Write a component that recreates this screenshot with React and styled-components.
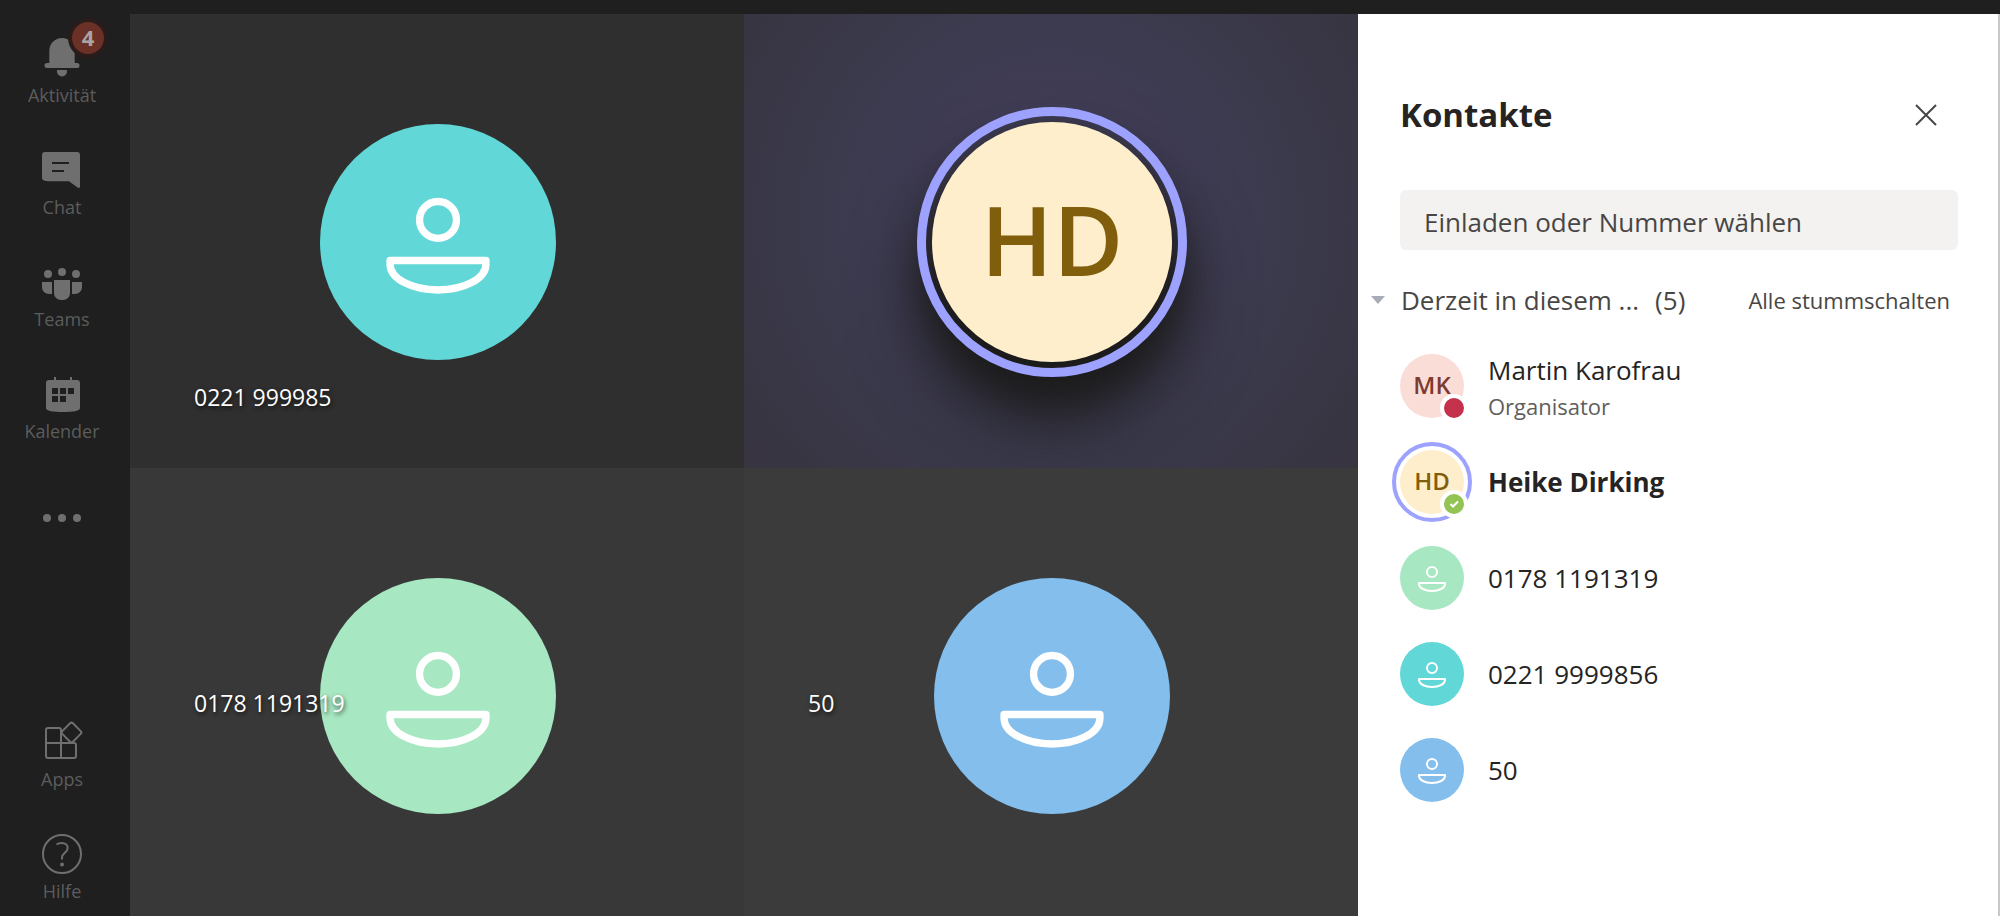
import React from 'react'
import { useState } from 'react'
import styled, { createGlobalStyle } from 'styled-components'

const GlobalStyle = createGlobalStyle`
  * {
    box-sizing: border-box;
  }
  body {
    margin: 0;
    background-color: #1f1f1f;
    font-family: 'Open Sans', 'Noto Sans', sans-serif;
  }
  button, input {
    font-family: inherit;
  }
  button {
    padding: 0;
    border: none;
    background: none;
    cursor: pointer;
  }
`;

const Container = styled.div`
  height: 100vh;
  padding-top: 14px;
  overflow: hidden;
  background-color: #1f1f1f;
`;

const Body = styled.div`
  height: calc(100vh - 8px);
  display: flex;
`;

const Sidebar = styled.nav`
  width: 130px;
  padding-right: 6px;
  flex-shrink: 0;
  display: flex;
  flex-direction: column;
`;

const Spacer = styled.div`
  flex: 1;
`;

const NavButton = styled.button`
  position: relative;
  height: 112px;
  padding-top: 20px;
  display: flex;
  flex-direction: column;
  align-items: center;
  color: #6f6f6f;
`;

const NavIcon = styled.svg`
  width: 48px;
  height: 48px;
  overflow: visible;
  fill: currentColor;
`;

const NavLabel = styled.span`
  font-size: 18px;
  line-height: 26px;
  color: #5c5c5c;
`;

const Badge = styled.span`
  position: absolute;
  top: 8px;
  left: 72px;
  width: 32px;
  height: 32px;
  border-radius: 50%;
  background-color: #6b3026;
  box-shadow: 0 0 0 4px #291c1a;
  color: #a9a5a4;
  font-size: 22px;
  font-weight: 700;
  line-height: 30px;
  text-align: center;
`;

const Stage = styled.main`
  flex: 1;
  min-width: 0;
  display: grid;
  grid-template-columns: 1fr 1fr;
  grid-template-rows: 1fr 1fr;
`;

const Tile = styled.section`
  position: relative;
  padding: 2px 0 0 2px;
  display: flex;
  align-items: center;
  justify-content: center;
  overflow: hidden;
  background: ${props => props.$background};
`;

const TileLabel = styled.span`
  position: absolute;
  left: 64px;
  top: ${props => props.$top};
  font-size: 23px;
  line-height: 30px;
  color: white;
  text-shadow: 1px 2px 4px rgba(0, 0, 0, 0.7);
`;

const Avatar = styled.div`
  position: relative;
  width: ${props => props.$size};
  height: ${props => props.$size};
  flex-shrink: 0;
  display: flex;
  align-items: center;
  justify-content: center;
  border-radius: 50%;
  background-color: ${props => props.$background};
  color: ${props => props.$color || 'white'};
  font-size: ${props => props.$fontSize};
  font-weight: 600;
  line-height: 1;
`;

const SpeakingAvatar = styled(Avatar)`
  padding-bottom: 6px;
  box-shadow: 0 48px 72px 8px #1c1c1c, 0 28px 40px 4px #1c1c1c;

  &::after {
    content: '';
    position: absolute;
    inset: -15px;
    border: 9px solid #9ea2ff;
    border-radius: 50%;
  }
`;

const RingAvatar = styled(Avatar)`
  &::before {
    content: '';
    position: absolute;
    inset: -8px;
    border: 4px solid #9ea2ff;
    border-radius: 50%;
  }
`;

const Initials = styled.span`
  padding-bottom: 2px;
`;

const PersonSvg = styled.svg`
  width: 50%;
  height: 50%;
  fill: none;
  stroke: currentColor;
  stroke-width: 2;
  stroke-linejoin: round;
`;

const Status = styled.span`
  position: absolute;
  right: -4px;
  bottom: -4px;
  width: 28px;
  height: 28px;
  display: flex;
  align-items: center;
  justify-content: center;
  border: 4px solid white;
  border-radius: 50%;
  background-color: ${props => props.$color};
`;

const Panel = styled.aside`
  width: 642px;
  padding: 76px 40px 0 42px;
  flex-shrink: 0;
  background-color: white;
  border-right: 2px solid #c8c8c8;
`;

const PanelHeader = styled.header`
  height: 50px;
  padding-right: 16px;
  display: flex;
  align-items: center;
  justify-content: space-between;
`;

const Title = styled.h1`
  margin: 0;
  font-size: 33px;
  line-height: 50px;
  font-weight: 700;
  color: #252423;
`;

const CloseButton = styled.button`
  width: 32px;
  height: 32px;
  display: flex;
  align-items: center;
  justify-content: center;
  color: #484644;
`;

const Search = styled.input`
  width: 100%;
  height: 60px;
  margin-top: 50px;
  padding: 4px 24px 0;
  border: none;
  border-radius: 6px;
  background-color: #f3f2f1;
  font-size: 26px;
  color: #484644;

  &::placeholder {
    color: #484644;
    opacity: 1;
  }
`;

const SectionHeader = styled.div`
  height: 40px;
  margin: 30px 8px 0 -29px;
  display: flex;
  align-items: center;
  color: #484644;
`;

const Toggle = styled.button`
  display: flex;
  align-items: center;
  gap: 16px;
  font-size: 26px;
  line-height: 40px;
  color: #484644;
`;

const MuteAll = styled.button`
  margin-left: auto;
  font-size: 22px;
  line-height: 40px;
  color: #484644;
`;

const List = styled.ul`
  margin: 18px 0 0;
  padding: 0;
  list-style: none;
`;

const Contact = styled.li`
  height: 96px;
  display: flex;
  align-items: center;
  gap: 24px;
`;

const ContactText = styled.div`
  padding-top: ${props => (props.$twoLines ? '4px' : '0')};
`;

const Name = styled.div`
  font-size: 26px;
  line-height: 36px;
  font-weight: ${props => (props.$bold ? 700 : 400)};
  color: #252423;
`;

const Role = styled.div`
  font-size: 22px;
  line-height: 36px;
  color: #605e5c;
`;

const PersonIcon = () => (
  <PersonSvg viewBox="0 0 32 32" aria-hidden="true">
    <circle cx="16" cy="10" r="5" />
    <path d="M3 21h26v1c0 4-6 7-13 7s-13-3-13-7z" />
  </PersonSvg>
)

const icons = {
  activity: (
    <>
      <path d="M24 4c-7 0-12.7 5.7-12.7 12.7V29H9a2.5 2.5 0 0 0 0 5h30a2.5 2.5 0 0 0 0-5h-2.3V16.7C36.7 9.7 31 4 24 4z" />
      <path d="M19 36h10v1.5a5 5 0 0 1-10 0z" />
    </>
  ),
  chat: (
    <>
      <path d="M7 6h32a3 3 0 0 1 3 3v31.5c0 1.5-1.3 1.9-2.4 1.1L31 35.3H15C8 35.3 4 34.7 4 32V9a3 3 0 0 1 3-3z" />
      <path d="M14 17h17M14 25h12" stroke="#1f1f1f" strokeWidth="2" />
    </>
  ),
  teams: (
    <>
      <circle cx="10" cy="16" r="4" />
      <circle cx="24" cy="14" r="4" />
      <circle cx="38" cy="16" r="4" />
      <path d="M4 24h10v12h-3a7 7 0 0 1-7-7zM16 22h16v13a7 7 0 0 1-7 7h-2a7 7 0 0 1-7-7zM34 24h10v5a7 7 0 0 1-7 7h-3z" />
    </>
  ),
  calendar: (
    <>
      <path d="M16 7h2v3h14V7h2v3h5a3 3 0 0 1 3 3v25c0 3-7 4-17 4S8 41 8 38V13a3 3 0 0 1 3-3h5z" />
      <path d="M14 18h6v6h-6zM22 18h6v6h-6zM30 18h6v6h-6zM14 26h6v6h-6zM22 26h6v6h-6z" fill="#1f1f1f" />
    </>
  ),
  more: (
    <>
      <circle cx="9" cy="36" r="4" />
      <circle cx="24" cy="36" r="4" />
      <circle cx="39" cy="36" r="4" />
    </>
  ),
  apps: (
    <g fill="none" stroke="currentColor" strokeWidth="2" strokeLinejoin="round">
      <path d="M23 25V12a2 2 0 0 0-2-2H10a2 2 0 0 0-2 2v26a2 2 0 0 0 2 2h26a2 2 0 0 0 2-2V27a2 2 0 0 0-2-2H8M23 25v15" />
      <rect x="26" y="7" width="15" height="15" rx="2" transform="rotate(45 33.5 14.5)" />
    </g>
  ),
  help: (
    <>
      <circle cx="24" cy="24" r="19" fill="none" stroke="currentColor" strokeWidth="2" />
      <path d="M18.5 14.5c1.5-1 3.3-1.5 5.2-1.5 3.6 0 6 2 6 5 0 4.500-5.700 5-5.700 9.500v2" fill="none" stroke="currentColor" strokeWidth="2" />
      <circle cx="24" cy="34.5" r="1.9" />
    </>
  ),
}

const topItems = [
  { icon: 'activity', label: 'Aktivität', badge: 4 },
  { icon: 'chat', label: 'Chat' },
  { icon: 'teams', label: 'Teams' },
  { icon: 'calendar', label: 'Kalender' },
  { icon: 'more' },
]

const bottomItems = [
  { icon: 'apps', label: 'Apps' },
  { icon: 'help', label: 'Hilfe' },
]

const contacts = [
  { name: 'Martin Karofrau', role: 'Organisator', initials: 'MK', background: '#fbddd8', color: '#7d3a2e', status: 'busy' },
  { name: 'Heike Dirking', initials: 'HD', background: '#feeecb', color: '#815e0c', status: 'available', speaking: true },
  { name: '0178 1191319', background: '#a7e7c2' },
  { name: '0221 9999856', background: '#61d7d7' },
  { name: '50', background: '#83beec' },
]

const NavItem = ({ item }) => (
  <NavButton aria-label={item.label || 'Mehr'}>
    <NavIcon viewBox="0 0 48 48" aria-hidden="true">{icons[item.icon]}</NavIcon>
    {item.label && <NavLabel>{item.label}</NavLabel>}
    {item.badge && <Badge>{item.badge}</Badge>}
  </NavButton>
)

const ContactRow = ({ contact }) => {
  const Picture = contact.speaking ? RingAvatar : Avatar
  return (
    <Contact>
      <Picture $size="64px" $fontSize="24px" $background={contact.background} $color={contact.color}>
        {contact.initials ? <Initials>{contact.initials}</Initials> : <PersonIcon />}
        {contact.status === 'busy' && <Status $color="#c4314b" />}
        {contact.status === 'available' && (
          <Status $color="#92c353">
            <svg width="20" height="20" viewBox="0 0 20 20" fill="none" stroke="white" strokeWidth="2">
              <path d="M6.5 10l2.5 2.5 5-5" />
            </svg>
          </Status>
        )}
      </Picture>
      <ContactText $twoLines={Boolean(contact.role)}>
        <Name $bold={contact.speaking}>{contact.name}</Name>
        {contact.role && <Role>{contact.role}</Role>}
      </ContactText>
    </Contact>
  )
}

function App() {

  const [query, setQuery] = useState('')
  const [open, setOpen] = useState(true)

  return (
    <>
      <GlobalStyle />
      <Container>
        <Body>
          <Sidebar>
            {topItems.map(item => <NavItem key={item.icon} item={item} />)}
            <Spacer />
            {bottomItems.map(item => <NavItem key={item.icon} item={item} />)}
          </Sidebar>

          <Stage>
            <Tile $background="#2f2f2f">
              <Avatar $size="236px" $background="#61d7d7"><PersonIcon /></Avatar>
              <TileLabel $top="368px">0221 999985</TileLabel>
            </Tile>
            <Tile $background="radial-gradient(circle at 50% 45%, #424059 0%, #403d56 30%, #3a394a 65%, #383440 100%)">
              <SpeakingAvatar $size="240px" $fontSize="96px" $background="#feeecb" $color="#815e0c">HD</SpeakingAvatar>
            </Tile>
            <Tile $background="#383838">
              <Avatar $size="236px" $background="#a7e7c2"><PersonIcon /></Avatar>
              <TileLabel $top="220px">0178 1191319</TileLabel>
            </Tile>
            <Tile $background="#3b3b3b">
              <Avatar $size="236px" $background="#83beec"><PersonIcon /></Avatar>
              <TileLabel $top="220px">50</TileLabel>
            </Tile>
          </Stage>

          <Panel>
            <PanelHeader>
              <Title>Kontakte</Title>
              <CloseButton aria-label="Schließen">
                <svg width="22" height="22" viewBox="0 0 22 22" fill="none" stroke="currentColor" strokeWidth="2">
                  <path d="M1 1l20 20M21 1L1 21" />
                </svg>
              </CloseButton>
            </PanelHeader>
            <Search
              aria-label="Einladen oder Nummer wählen"
              placeholder="Einladen oder Nummer wählen"
              value={query}
              onChange={e => setQuery(e.target.value)}
            />
            <SectionHeader>
              <Toggle aria-expanded={open} onClick={() => setOpen(!open)}>
                <svg width="14" height="8" viewBox="0 0 14 8" fill="#a8abb8">
                  <path d="M0 0h14L7 8z" />
                </svg>
                <span>Derzeit in diesem ...</span>
                <span>(5)</span>
              </Toggle>
              <MuteAll>Alle stummschalten</MuteAll>
            </SectionHeader>
            {open && (
              <List>
                {contacts.map(contact => <ContactRow key={contact.name} contact={contact} />)}
              </List>
            )}
          </Panel>
        </Body>
      </Container>
    </>
  );
}

export default App;
